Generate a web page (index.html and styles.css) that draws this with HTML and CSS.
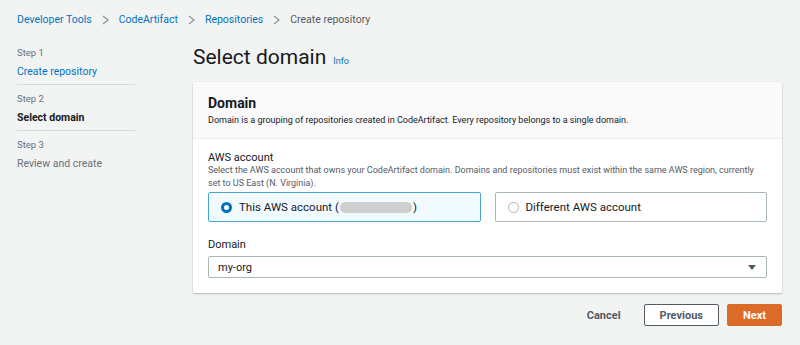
FILE: index.html
```html
<!DOCTYPE html>
<html lang="en">
<head>
    <meta charset="UTF-8">
    <title>Create repository - CodeArtifact</title>
    <link rel="stylesheet" href="styles.css">
</head>
<body>
    <nav class="breadcrumbs">
        <a href="#">Developer Tools</a>
        <svg class="sep" width="7" height="10" viewBox="0 0 7 10"><polyline points="1,1 6,5 1,9" /></svg>
        <a href="#">CodeArtifact</a>
        <svg class="sep" width="7" height="10" viewBox="0 0 7 10"><polyline points="1,1 6,5 1,9" /></svg>
        <a href="#">Repositories</a>
        <svg class="sep" width="7" height="10" viewBox="0 0 7 10"><polyline points="1,1 6,5 1,9" /></svg>
        <span class="current">Create repository</span>
    </nav>

    <div class="layout">
        <!-- Wizard steps -->
        <ul class="steps">
            <li class="step">
                <div class="step-num">Step 1</div>
                <a href="#" class="step-name">Create repository</a>
            </li>
            <li class="step active">
                <div class="step-num">Step 2</div>
                <div class="step-name">Select domain</div>
            </li>
            <li class="step disabled">
                <div class="step-num">Step 3</div>
                <div class="step-name">Review and create</div>
            </li>
        </ul>

        <main class="content">
            <h1>Select domain <a href="#" class="info">Info</a></h1>

            <section class="card">
                <header class="card-header">
                    <h2>Domain</h2>
                    <p>Domain is a grouping of repositories created in CodeArtifact. Every repository belongs to a single domain.</p>
                </header>
                <div class="card-body">
                    <div class="field">
                        <div class="label">AWS account</div>
                        <div class="hint">Select the AWS account that owns your CodeArtifact domain. Domains and repositories must exist within the same AWS region, currently set to US East (N. Virginia).</div>
                        <div class="tiles">
                            <label class="tile selected">
                                <span class="radio"></span>
                                This AWS account (<span class="masked"></span>)
                            </label>
                            <label class="tile">
                                <span class="radio"></span>
                                Different AWS account
                            </label>
                        </div>
                    </div>
                    <div class="field">
                        <div class="label">Domain</div>
                        <div class="select">
                            <span>my-org</span>
                            <span class="caret"></span>
                        </div>
                    </div>
                </div>
            </section>

            <div class="actions">
                <button class="btn-link">Cancel</button>
                <button class="btn">Previous</button>
                <button class="btn primary">Next</button>
            </div>
        </main>
    </div>
</body>
</html>
```

FILE: styles.css
```css
body {
    margin: 0;
    background-color: #f2f3f3;
    color: #16191f;
    font-family: Roboto, "Noto Sans", sans-serif;
    font-size: 10.5px;
}

a {
    color: #0073bb;
    text-decoration: none;
}

.breadcrumbs {
    display: flex;
    align-items: center;
    padding: 12px 17px 0;
    height: 16px;
    line-height: 16px;
}

.breadcrumbs .sep {
    margin: 0 10px;
    fill: none;
    stroke: #879596;
    stroke-width: 1.2;
}

.breadcrumbs .current {
    color: #545b64;
}

.layout {
    display: flex;
    padding: 18px 18px 0 17px;
}

/* Steps */
.steps {
    list-style: none;
    margin: 0;
    padding: 0;
    width: 118px;
    margin-right: 58px;
}

.step {
    border-bottom: 1px solid #d5dbdb;
    padding: 0 0 5px;
    margin-bottom: 7px;
}

.step:last-child {
    border-bottom: none;
}

.step-num {
    color: #687078;
    font-size: 9.5px;
    line-height: 14px;
    margin-bottom: 5px;
}

.step-name {
    display: block;
    line-height: 14px;
}

.step.active .step-name {
    font-weight: bold;
}

.step.disabled .step-name {
    color: #687078;
}

/* Main */
.content {
    flex: 1;
}

h1 {
    display: flex;
    align-items: baseline;
    gap: 7px;
    height: 26px;
    margin: -2px 0 12px;
    font-size: 21px;
    font-weight: normal;
    line-height: 26px;
}

.info {
    font-size: 9px;
    line-height: 10px;
}

.card {
    background: #fff;
    box-shadow: 0 1px 2px rgba(0, 28, 36, 0.25), 0 0 1px rgba(0, 28, 36, 0.2);
    border-radius: 1px;
}

.card-header {
    background: #fafafa;
    border-bottom: 1px solid #eaeded;
    padding: 12px 15px 11px;
}

.card-header h2 {
    margin: 0;
    font-size: 14px;
    line-height: 18px;
}

.card-header p {
    margin: 2px 0 0;
    font-size: 9px;
    line-height: 13px;
}

.card-body {
    padding: 12px 15px 15px;
}

.field + .field {
    margin-top: 16px;
}

.label {
    font-size: 11px;
    line-height: 13px;
}

.hint {
    font-size: 9px;
    line-height: 13px;
    color: #545b64;
}

.tiles {
    display: grid;
    grid-template-columns: 1fr 1fr;
    gap: 14px;
    margin-top: 2px;
}

.tile {
    display: flex;
    align-items: center;
    height: 28px;
    padding: 0 12px;
    border: 1px solid #aab7b8;
    border-radius: 2px;
    font-size: 11.5px;
}

.tile.selected {
    background: #f1faff;
    border-color: #4ba4cf;
}

.radio {
    width: 11px;
    height: 11px;
    border: 1px solid #aab7b8;
    border-radius: 50%;
    margin-right: 7px;
    box-sizing: border-box;
    background: #fff;
}

.tile.selected .radio {
    border: 3.5px solid #0073bb;
}

.masked {
    display: inline-block;
    width: 72px;
    height: 11px;
    background: #cfcfcf;
    border-radius: 6px;
    margin: 0 1px;
}

.select {
    display: flex;
    justify-content: space-between;
    align-items: center;
    margin-top: 5px;
    height: 20px;
    padding: 0 10px 0 9px;
    border: 1px solid #aab7b8;
    border-radius: 2px;
    font-size: 11px;
}

.caret {
    width: 0;
    height: 0;
    border-left: 4px solid transparent;
    border-right: 4px solid transparent;
    border-top: 5px solid #545b64;
}

/* Buttons */
.actions {
    display: flex;
    justify-content: flex-end;
    align-items: center;
    gap: 8px;
    margin-top: 11px;
}

button {
    font-family: inherit;
    font-size: 11px;
    font-weight: bold;
    height: 22px;
    padding: 0 15px;
    border-radius: 2px;
    cursor: pointer;
}

.btn-link {
    background: none;
    border: none;
    color: #545b64;
}

.btn {
    background: #fff;
    border: 1px solid #545b64;
    color: #545b64;
    min-width: 73px;
}

.btn.primary {
    background: #dc6b28;
    border-color: #dc6b28;
    color: #fff;
    min-width: 54px;
}
```
